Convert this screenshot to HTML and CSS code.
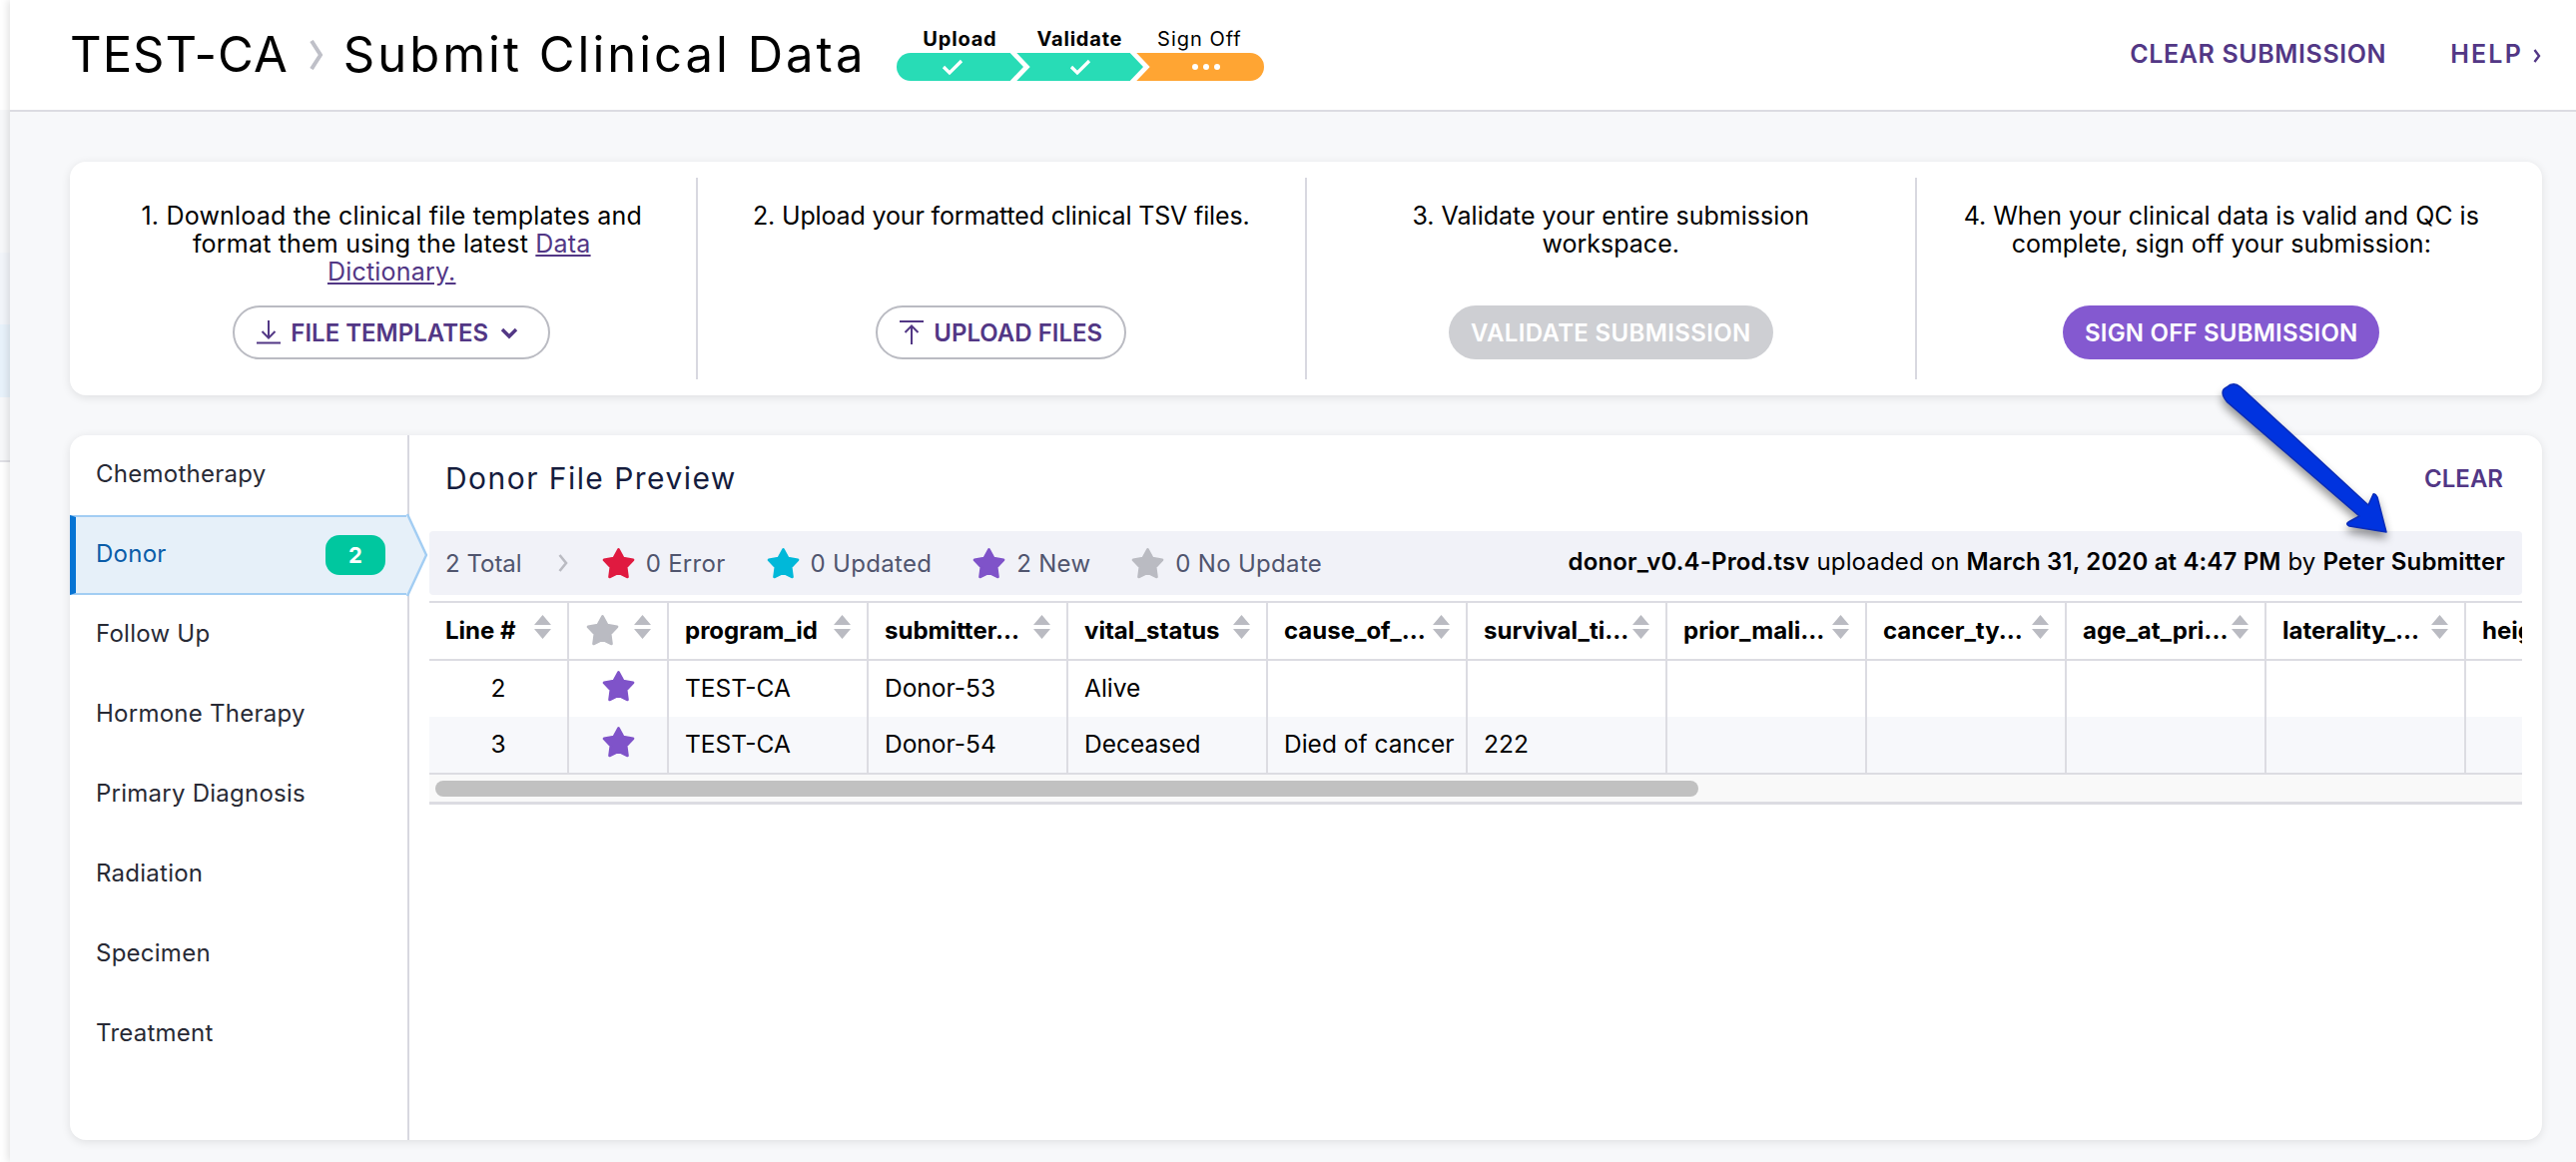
FILE: index.html
```html
<!DOCTYPE html>
<html lang="en">
<head>
    <meta charset="UTF-8">
    <title>Submit Clinical Data</title>
    <link rel="stylesheet" href="styles.css">
</head>
<body>
    <svg class="defs" width="0" height="0">
        <symbol id="star" viewBox="0 0 32 32">
            <polygon points="16,3 20.35,11.01 29.31,12.67 23.04,19.29 24.23,28.33 16,24.4 7.77,28.33 8.96,19.29 2.69,12.67 11.65,11.01" fill="currentColor" stroke="currentColor" stroke-width="2.4" stroke-linejoin="round"/>
        </symbol>
        <symbol id="sort" viewBox="0 0 17 24">
            <path d="M8.5 0 L17 10 H0 Z M0 14 H17 L8.5 24 Z" fill="#babbc2"/>
        </symbol>
    </svg>

    <div class="app">
        <div class="rail">
            <div class="rail-a"></div>
            <div class="rail-b"></div>
            <div class="rail-c"></div>
            <div class="rail-d"></div>
            <div class="rail-e"></div>
        </div>

        <div class="main">
            <header class="topbar">
                <h1 class="title">
                    <span class="t-program">TEST-CA</span>
                    <svg class="title-chev" width="14" height="30" viewBox="0 0 14 30"><path d="M2 1 L11 15 L2 29" fill="none" stroke="#bfc0c8" stroke-width="4"/></svg>
                    <span class="t-page">Submit Clinical Data</span>
                </h1>
                <div class="progress">
                    <div class="progress-labels">
                        <span class="done">Upload</span>
                        <span class="done">Validate</span>
                        <span>Sign Off</span>
                    </div>
                    <svg class="progress-bar" width="368" height="28" viewBox="0 0 368 28">
                        <path d="M14 0 H113.7 L127 14 L113.7 28 H14 A14 14 0 0 1 14 0 Z" fill="#28dcb6"/>
                        <path d="M120.3 0 H233.7 L247 14 L233.7 28 H120.3 L133.7 14 Z" fill="#28dcb6"/>
                        <path d="M240.3 0 H354 A14 14 0 0 1 354 28 H240.3 L253.7 14 Z" fill="#ffa533"/>
                        <path d="M47 14 L53 20 L65 8 M175 14 L181 20 L193 8" fill="none" stroke="#fff" stroke-width="3.2"/>
                        <circle cx="299" cy="14" r="3" fill="#fff"/>
                        <circle cx="310" cy="14" r="3" fill="#fff"/>
                        <circle cx="321" cy="14" r="3" fill="#fff"/>
                    </svg>
                </div>
                <nav class="top-links">
                    <a class="link-clear">CLEAR SUBMISSION</a>
                    <a class="link-help">HELP<svg width="8" height="14" viewBox="0 0 8 14"><path d="M1.5 1 L6 7 L1.5 13" fill="none" stroke="#523785" stroke-width="2.4"/></svg></a>
                </nav>
            </header>

            <div class="content">
                <section class="card steps">
                    <div class="step step-one">
                        <p>1. Download the clinical file templates and<br>format them using the latest <a class="dict">Data<br>Dictionary.</a></p>
                        <button class="btn btn-outline btn-templates">
                            <svg width="24" height="24" viewBox="0 0 24 24"><path d="M12 0 V17 M5.5 11 L12 17.5 L18.5 11 M0 22.5 H24" fill="none" stroke="#523785" stroke-width="2"/></svg>
                            FILE TEMPLATES
                            <svg class="caret" width="18" height="12" viewBox="0 0 18 12"><path d="M2 2 L9 9 L16 2" fill="none" stroke="#523785" stroke-width="3.4"/></svg>
                        </button>
                    </div>
                    <div class="step step-two">
                        <p>2. Upload your formatted clinical TSV files.</p>
                        <button class="btn btn-outline">
                            <svg width="24" height="24" viewBox="0 0 24 24"><path d="M0 1 H24 M12 24 V6 M5.5 12 L12 5.5 L18.5 12" fill="none" stroke="#523785" stroke-width="2"/></svg>
                            UPLOAD FILES
                        </button>
                    </div>
                    <div class="step">
                        <p>3. Validate your entire submission<br>workspace.</p>
                        <button class="btn btn-disabled">VALIDATE SUBMISSION</button>
                    </div>
                    <div class="step">
                        <p>4. When your clinical data is valid and QC is<br>complete, sign off your submission:</p>
                        <button class="btn btn-primary">SIGN OFF SUBMISSION</button>
                    </div>
                </section>

                <section class="card preview">
                    <ul class="side-menu">
                        <li>Chemotherapy</li>
                        <li class="active">
                            Donor<span class="badge">2</span>
                            <svg class="active-tip" width="22" height="82" viewBox="0 0 22 82"><path d="M0 1 L2 1 L20 41 L2 81 L0 81 Z" fill="#e6f0f9"/><path d="M1 0 L20 41 L1 82" fill="none" stroke="#a2cdf3" stroke-width="2.4"/></svg>
                        </li>
                        <li>Follow Up</li>
                        <li>Hormone Therapy</li>
                        <li>Primary Diagnosis</li>
                        <li>Radiation</li>
                        <li>Specimen</li>
                        <li>Treatment</li>
                    </ul>

                    <div class="file-pane">
                        <div class="pane-head">
                            <h2>Donor File Preview</h2>
                            <a class="link-clear-file">CLEAR</a>
                        </div>

                        <div class="stats">
                            <span class="stat-total">2 Total</span>
                            <svg class="stat-chev" width="10" height="20" viewBox="0 0 10 20"><path d="M1.5 2 L8 10 L1.5 18" fill="none" stroke="#babbc2" stroke-width="2.6"/></svg>
                            <svg class="star s-error"><use href="#star"/></svg><span class="stat">0 Error</span>
                            <svg class="star s-updated"><use href="#star"/></svg><span class="stat">0 Updated</span>
                            <svg class="star s-new"><use href="#star"/></svg><span class="stat">2 New</span>
                            <svg class="star s-none"><use href="#star"/></svg><span class="stat">0 No Update</span>
                            <span class="upload-info"><b>donor_v0.4-Prod.tsv</b> uploaded on <b>March 31, 2020 at 4:47 PM</b> by <b>Peter Submitter</b></span>
                        </div>

                        <div class="table-wrap">
                            <table class="data-table">
                                <thead>
                                    <tr>
                                        <th class="col-line"><div class="th-in">Line #<svg class="sort"><use href="#sort"/></svg></div></th>
                                        <th class="col-star"><div class="th-in"><svg class="star s-none"><use href="#star"/></svg><svg class="sort"><use href="#sort"/></svg></div></th>
                                        <th><div class="th-in">program_id<svg class="sort"><use href="#sort"/></svg></div></th>
                                        <th><div class="th-in">submitter...<svg class="sort"><use href="#sort"/></svg></div></th>
                                        <th><div class="th-in">vital_status<svg class="sort"><use href="#sort"/></svg></div></th>
                                        <th><div class="th-in">cause_of_...<svg class="sort"><use href="#sort"/></svg></div></th>
                                        <th><div class="th-in">survival_ti...<svg class="sort"><use href="#sort"/></svg></div></th>
                                        <th><div class="th-in">prior_mali...<svg class="sort"><use href="#sort"/></svg></div></th>
                                        <th><div class="th-in">cancer_ty...<svg class="sort"><use href="#sort"/></svg></div></th>
                                        <th><div class="th-in">age_at_pri...<svg class="sort"><use href="#sort"/></svg></div></th>
                                        <th><div class="th-in">laterality_...<svg class="sort"><use href="#sort"/></svg></div></th>
                                        <th><div class="th-in">height...<svg class="sort"><use href="#sort"/></svg></div></th>
                                    </tr>
                                </thead>
                                <tbody>
                                    <tr>
                                        <td class="center">2</td>
                                        <td class="center"><svg class="star s-new"><use href="#star"/></svg></td>
                                        <td>TEST-CA</td><td>Donor-53</td><td>Alive</td><td></td><td></td><td></td><td></td><td></td><td></td><td></td>
                                    </tr>
                                    <tr class="alt">
                                        <td class="center">3</td>
                                        <td class="center"><svg class="star s-new"><use href="#star"/></svg></td>
                                        <td>TEST-CA</td><td>Donor-54</td><td>Deceased</td><td>Died of cancer</td><td>222</td><td></td><td></td><td></td><td></td><td></td>
                                    </tr>
                                </tbody>
                            </table>
                        </div>
                        <div class="scroll-track"><div class="scroll-thumb"></div></div>
                    </div>
                </section>
            </div>
        </div>
    </div>

    <svg class="callout" width="190" height="170" viewBox="2220 380 190 170">
        <path d="M2243.7 387.6 L2372 506 L2377 495 Q2379 494 2381 498 L2390 533 L2353 527 Q2349 525 2352 523 L2363 517 L2230.3 402.4 Q2222 392 2230 388 Q2237 382 2243.7 387.6 Z" fill="#0033df" stroke="#0a2cb8" stroke-width="1.5" stroke-linejoin="round"/>
    </svg>
</body>
</html>
```

FILE: styles.css
```css
* {
    box-sizing: border-box;
}
html, body {
    margin: 0;
    height: 1164px;
    overflow: hidden;
}
body {
    font-family: Inter, "Noto Sans", sans-serif;
    font-size: 25px;
    color: #000;
    background-color: #fff;
    position: relative;
}
.defs {
    position: absolute;
}
.app {
    display: flex;
    height: 1164px;
}

/* left rail peeking out behind the main panel */
.rail {
    width: 10px;
    flex: none;
    display: flex;
    flex-direction: column;
}
.rail-a { height: 110px; background-color: #fff; }
.rail-b { height: 143px; background-color: #f7f8fa; }
.rail-c { height: 72px; background-color: #f2f5fa; }
.rail-d { height: 73px; background-color: #e8f2fb; }
.rail-e { height: 65px; background-color: #f7f8fa; border-bottom: 2px solid #e0e0e6; }

.main {
    flex: 1;
    min-width: 0;
    background-color: #f7f8fa;
    box-shadow: -2px 0 8px rgba(0, 0, 0, 0.12);
    position: relative;
}

/* header */
.topbar {
    height: 112px;
    background-color: #fff;
    border-bottom: 2px solid #dcdce2;
    display: flex;
    align-items: center;
    padding: 0 35px 2px 60px;
}
.title {
    display: flex;
    align-items: center;
    margin: 0;
    font-size: 49px;
    font-weight: 400;
    white-space: nowrap;
}
.t-program { letter-spacing: 1px; }
.title-chev { margin: 2px 20px 0 21px; }
.t-page { letter-spacing: 3px; }
.progress {
    margin-left: 31px;
    width: 368px;
}
.progress-labels {
    display: grid;
    grid-template-columns: repeat(3, 120px);
    padding-left: 3px;
    text-align: center;
    font-size: 20px;
    letter-spacing: 1px;
    line-height: 24px;
    height: 26px;
    white-space: nowrap;
}
.progress-labels .done {
    font-weight: 700;
    letter-spacing: 0.8px;
}
.progress-bar {
    display: block;
}
.top-links {
    margin-left: auto;
    display: flex;
    align-items: center;
    gap: 64px;
    color: #523785;
    font-size: 25px;
    font-weight: 600;
    letter-spacing: 0.6px;
}
.link-help {
    letter-spacing: 2.2px;
}
.link-help svg {
    margin-left: 10px;
}

/* content */
.content {
    padding: 50px 34px 0 60px;
}
.card {
    background-color: #fff;
    border-radius: 16px;
    box-shadow: 0 2px 10px rgba(0, 0, 0, 0.1);
}
.steps {
    height: 234px;
    padding: 16px 16px 16px 18px;
    display: grid;
    grid-template-columns: repeat(4, 1fr);
}
.step {
    display: flex;
    flex-direction: column;
    align-items: center;
    justify-content: space-between;
    padding: 24px 0 20px;
    text-align: center;
    border-right: 2px solid #d8d8e0;
}
.step:last-child {
    border-right: none;
}
.step p {
    margin: 0;
    line-height: 28px;
    font-size: 25px;
    white-space: nowrap;
}
.step-one p {
    letter-spacing: 0.2px;
}
.step-two p {
    letter-spacing: -0.15px;
}
.dict {
    color: #523785;
    text-decoration: underline;
}
.btn {
    height: 54px;
    border-radius: 27px;
    padding: 0 22px;
    font-family: inherit;
    font-size: 24px;
    font-weight: 600;
    display: flex;
    align-items: center;
    gap: 10px;
    white-space: nowrap;
}
.btn-outline {
    background-color: #fff;
    border: 2px solid #babbc2;
    color: #523785;
}
.btn-disabled {
    background-color: #cecfd3;
    border: none;
    color: #fff;
    letter-spacing: 0.35px;
}
.btn-primary {
    background-color: #8459d0;
    border: none;
    color: #fff;
    letter-spacing: 0.2px;
}
.caret {
    margin: 2px 8px 0 2px;
}

/* preview card */
.preview {
    margin-top: 40px;
    height: 706px;
    display: flex;
}
.side-menu {
    list-style: none;
    margin: 0;
    padding: 0;
    width: 340px;
    flex: none;
    border-right: 2px solid #d8d8e0;
    font-size: 24px;
    letter-spacing: 0.25px;
    color: #282a35;
}
.side-menu li {
    height: 80px;
    display: flex;
    align-items: center;
    padding: 0 0 3px 26px;
    position: relative;
}
.side-menu li.active {
    color: #0a5ca8;
    background-color: #e6f0f9;
    border-top: 2px solid #a2cdf3;
    border-bottom: 2px solid #a2cdf3;
    border-left: 6px solid #0774d3;
    padding-left: 20px;
    margin-right: -1px;
}
.badge {
    position: absolute;
    left: 250px;
    top: 18px;
    width: 60px;
    height: 40px;
    border-radius: 14px;
    background-color: #00c79f;
    color: #fff;
    font-size: 22px;
    font-weight: 700;
    display: flex;
    align-items: center;
    justify-content: center;
}
.active-tip {
    position: absolute;
    left: 331px;
    top: -3px;
    overflow: visible;
}
.file-pane {
    flex: 1;
    min-width: 0;
    padding: 0 20px;
}
.pane-head {
    height: 96px;
    display: flex;
    align-items: center;
    justify-content: space-between;
    padding: 0 19px 10px 16px;
}
.pane-head h2 {
    margin: 0;
    font-size: 30px;
    font-weight: 400;
    letter-spacing: 1.45px;
    color: #151c3d;
}
.link-clear-file {
    color: #523785;
    font-size: 24px;
    font-weight: 600;
}
.stats {
    height: 64px;
    background-color: #f1f2f8;
    border-radius: 4px;
    display: flex;
    align-items: center;
    padding: 0 17px 0 16px;
    color: #50556e;
    font-size: 24px;
    white-space: nowrap;
}
.stat-chev { margin: 0 33px 0 36px; }
.star {
    width: 35px;
    height: 35px;
    flex: none;
}
.stat {
    margin: 0 40px 0 10px;
    letter-spacing: 0.3px;
}
.s-error { color: #e01a40; }
.s-updated { color: #00b8d9; }
.s-new { color: #7f53c9; }
.s-none { color: #babbc2; }
.upload-info {
    margin-left: auto;
    color: #000;
    margin-top: -3px;
    letter-spacing: 0.15px;
}
.upload-info b {
    font-weight: 600;
}

/* table */
.table-wrap {
    margin-top: 6px;
    border-top: 2px solid #dcdce2;
    overflow: hidden;
}
.data-table {
    width: 2240px;
    table-layout: fixed;
    border-collapse: separate;
    border-spacing: 0;
}
.data-table th, .data-table td {
    width: 200px;
    border-right: 2px solid #dcdce2;
    padding: 0 16px 2px;
    text-align: left;
    white-space: nowrap;
    overflow: hidden;
}
.data-table th.col-line { width: 140px; }
.data-table th.col-star { width: 100px; }
.data-table th {
    height: 58px;
    border-bottom: 2px solid #dcdce2;
    font-size: 24px;
    font-weight: 700;
}
.data-table td {
    height: 56px;
    font-size: 24.5px;
}
.data-table td.center {
    text-align: center;
    padding: 0 0 2px;
}
.data-table td .star {
    display: block;
    margin: -4px auto 0;
}
.alt td {
    background-color: #f7f8fb;
}
.th-in {
    display: flex;
    align-items: center;
    justify-content: space-between;
}
.sort {
    width: 17px;
    height: 24px;
    flex: none;
    margin-bottom: 6px;
}
.scroll-track {
    height: 32px;
    background-color: #f9f9f9;
    border-top: 2px solid #dcdce2;
    border-bottom: 3px solid #dcdce2;
    padding: 6px;
}
.scroll-thumb {
    width: 1265px;
    height: 16px;
    border-radius: 8px;
    background-color: #c1c1c1;
}

/* annotation drawn over the screenshot */
.callout {
    position: absolute;
    left: 2220px;
    top: 380px;
    overflow: visible;
    filter: drop-shadow(0 6px 4px rgba(0, 0, 0, 0.4));
}
```
